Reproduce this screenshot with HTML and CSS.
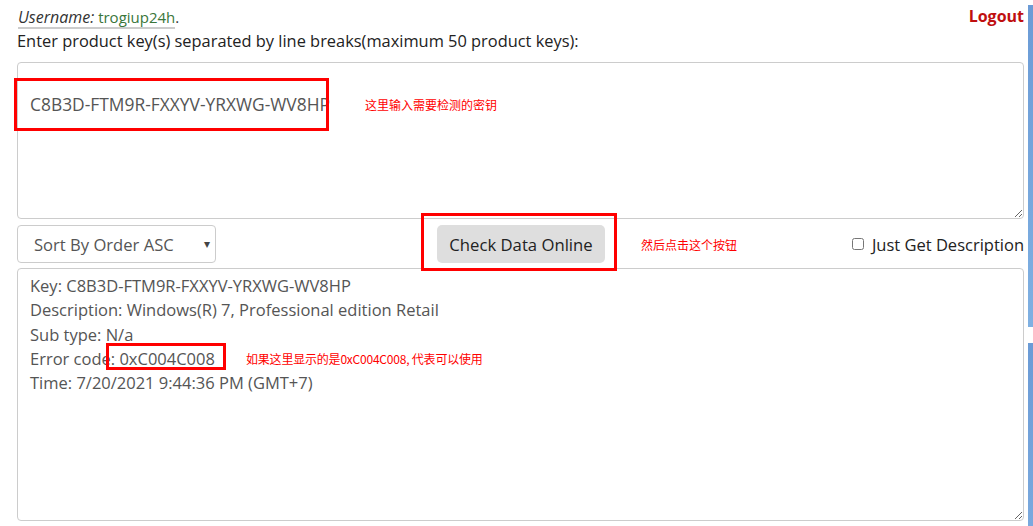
FILE: index.html
```html
<!DOCTYPE html>
<html lang="en">
<head>
    <meta charset="UTF-8">
    <meta name="viewport" content="width=device-width, initial-scale=1.0">
    <title>Check Product Key</title>
    <link rel="stylesheet" href="styles.css">
</head>
<body>
    <div class="page">
        <div class="main">
            <div class="top-bar">
                <div class="user">
                    <abbr class="user-name"><em>Username:</em> <span class="green">trogiup24h</span></abbr>.
                </div>
                <a class="logout" href="#">Logout</a>
            </div>
            <label class="hint" for="keys">Enter product key(s) separated by line breaks(maximum 50 product keys):</label>
            <textarea id="keys" class="keys" spellcheck="false">

C8B3D-FTM9R-FXXYV-YRXWG-WV8HP</textarea>

            <div class="controls">
                <div class="select-wrap">
                    <select class="sort">
                        <option>Sort By Order ASC</option>
                        <option>Sort By Order DESC</option>
                    </select>
                    <span class="caret">&#9662;</span>
                </div>
                <button class="check">Check Data Online</button>
                <label class="desc-only"><input type="checkbox"> Just Get Description</label>
            </div>

            <textarea class="result" readonly spellcheck="false">Key: C8B3D-FTM9R-FXXYV-YRXWG-WV8HP
Description: Windows(R) 7, Professional edition Retail
Sub type: N/a
Error code: 0xC004C008
Time: 7/20/2021 9:44:36 PM (GMT+7)</textarea>

            <!-- annotations drawn over the screenshot -->
            <div class="mark mark-key"></div>
            <div class="mark mark-btn"></div>
            <div class="mark mark-code"></div>
            <span class="note note-key">这里输入需要检测的密钥</span>
            <span class="note note-btn">然后点击这个按钮</span>
            <span class="note note-code">如果这里显示的是0xC004C008, 代表可以使用</span>
        </div>
        <div class="side">
            <div class="side-top"></div>
            <div class="side-bottom"></div>
        </div>
    </div>
</body>
</html>
```

FILE: styles.css
```css
body {
    font-family: 'Open Sans', 'Noto Sans', sans-serif;
    background-color: #ffffff;
    color: #222;
    margin: 0;
    padding: 0;
}
.page {
    display: flex;
    height: 526px;
    overflow: hidden;
}
.main {
    position: relative;
    flex: 1;
    padding: 5px 4px 0 17px;
    display: flex;
    flex-direction: column;
}
.side {
    width: 5px;
    display: flex;
    flex-direction: column;
    gap: 16px;
    padding-top: 5px;
}
.side-top {
    height: 322px;
    background: linear-gradient(#6b9bd6, #7fb0e2);
}
.side-bottom {
    flex: 1;
    background: linear-gradient(#6b9bd6, #7aa9de);
}
.top-bar {
    display: flex;
    justify-content: space-between;
    align-items: center;
    height: 24px;
    font-size: 15px;
}
.user {
    color: #333;
    padding-left: 1px;
}
.user-name {
    text-decoration: none;
    border-bottom: 2px solid #ccc;
}
.user-name em {
    color: #333;
    font-size: 16px;
}
.green {
    color: #3a763a;
    font-size: 15px;
}
.logout {
    color: #bf0f0f;
    font-weight: bold;
    font-size: 16px;
    text-decoration: none;
    margin-top: -2px;
}
.hint {
    font-size: 16.4px;
    line-height: 24px;
    color: #222;
    margin-bottom: 9px;
}
textarea {
    font-family: 'Open Sans', 'Noto Sans', sans-serif;
    font-size: 16.5px;
    line-height: 24.3px;
    color: #555;
    border: 1px solid #ccc;
    border-radius: 4px;
    padding: 5px 12px 6px;
    margin: 0;
    outline: none;
    box-sizing: border-box;
    width: 100%;
    resize: vertical;
}
.keys {
    height: 157px;
    font-size: 17.4px;
    line-height: 23px;
    padding-top: 7px;
}
.controls {
    display: flex;
    align-items: center;
    justify-content: space-between;
    height: 38px;
    margin: 6px 0 5px;
    position: relative;
}
.select-wrap {
    position: relative;
    width: 199px;
    height: 38px;
}
.sort {
    appearance: none;
    width: 100%;
    height: 100%;
    border: 1px solid #ccc;
    border-radius: 4px;
    background: #fff;
    color: #555;
    font-family: 'Open Sans', 'Noto Sans', sans-serif;
    font-size: 16.6px;
    padding: 0 16px;
}
.caret {
    position: absolute;
    right: 6px;
    top: 10px;
    font-size: 12px;
    color: #444;
    pointer-events: none;
}
.check {
    position: absolute;
    left: 420px;
    top: 0;
    width: 168px;
    height: 38px;
    border: none;
    border-radius: 5px;
    background-color: #dedede;
    color: #222;
    font-family: 'Open Sans', 'Noto Sans', sans-serif;
    font-size: 16.7px;
    cursor: pointer;
}
.desc-only {
    display: flex;
    align-items: center;
    gap: 8px;
    font-size: 16.5px;
    color: #222;
}
.desc-only input {
    margin: 0;
    width: 12px;
    height: 12px;
}
.result {
    height: 253px;
}
.mark {
    position: absolute;
    border: 3px solid #ff0000;
    box-sizing: border-box;
}
.mark-key {
    left: 14px;
    top: 78px;
    width: 315px;
    height: 53px;
}
.mark-btn {
    left: 421px;
    top: 213px;
    width: 196px;
    height: 58px;
}
.mark-code {
    left: 106px;
    top: 343px;
    width: 120px;
    height: 27px;
}
.note {
    position: absolute;
    font-family: 'Noto Sans CJK SC', sans-serif;
    font-size: 12px;
    line-height: 14px;
    color: #ff0000;
}
.note-key {
    left: 365px;
    top: 98px;
}
.note-btn {
    left: 641px;
    top: 238px;
}
.note-code {
    left: 246px;
    top: 352px;
    letter-spacing: -0.2px;
}
```
